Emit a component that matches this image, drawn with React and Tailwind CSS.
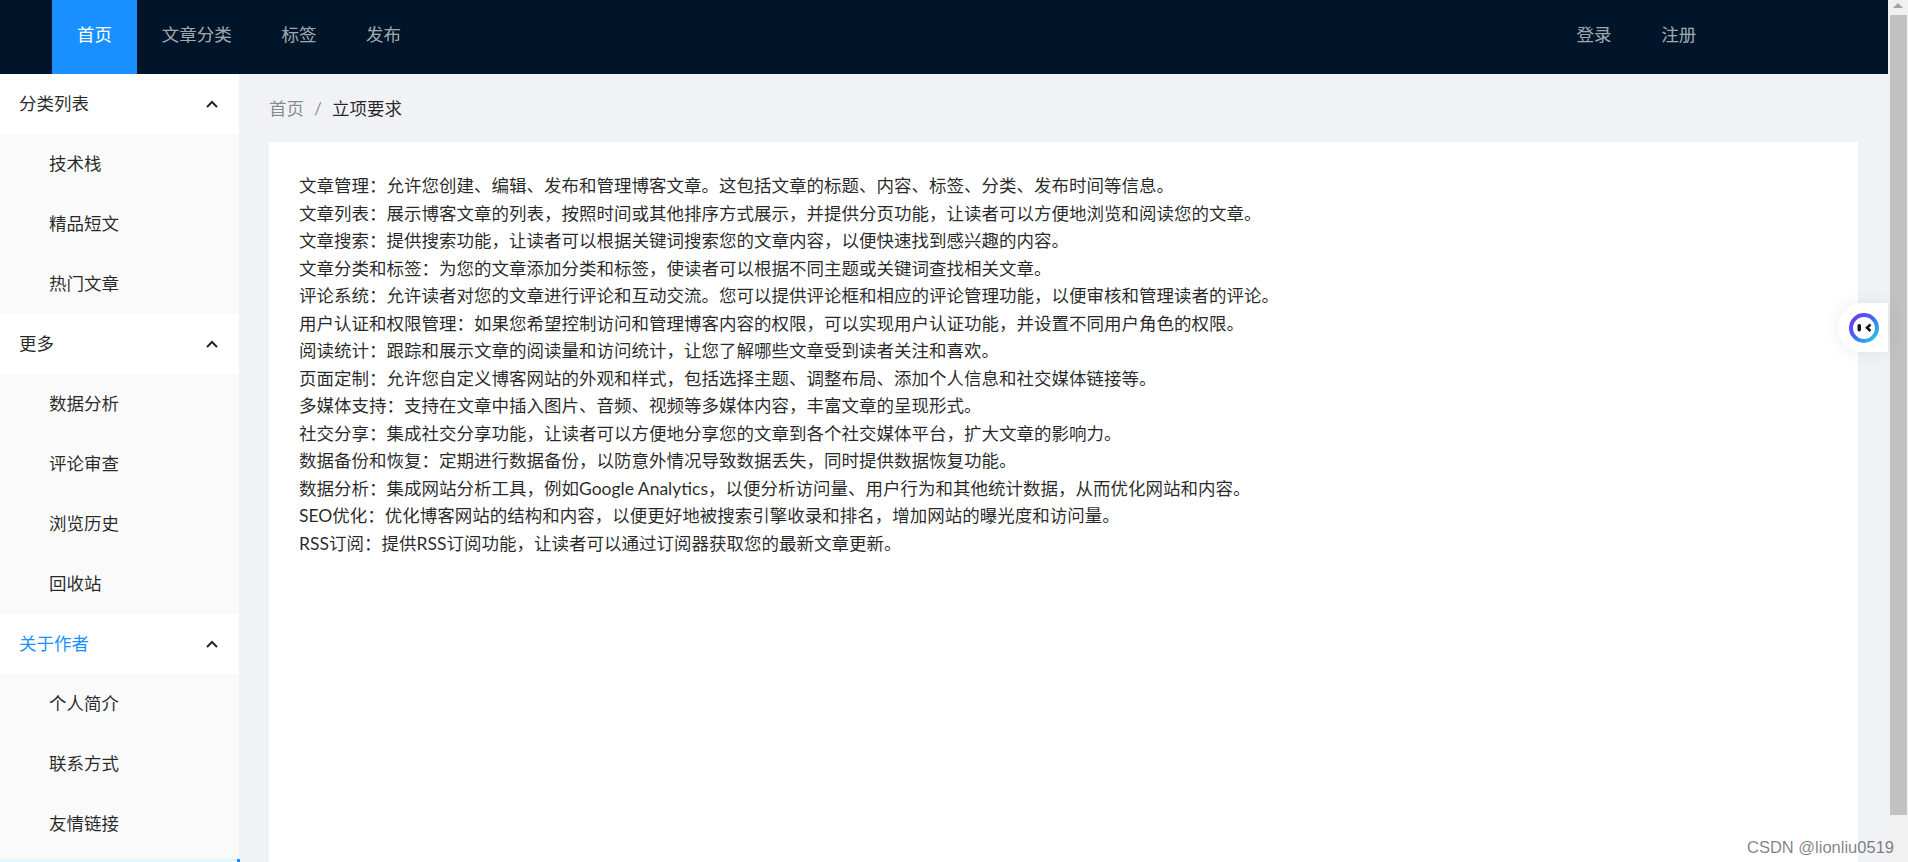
import React from 'react';

const navLeft = ['文章分类', '标签', '发布'];
const navRight = ['登录', '注册'];

const menu = [
  { title: '分类列表', items: ['技术栈', '精品短文', '热门文章'] },
  { title: '更多', items: ['数据分析', '评论审查', '浏览历史', '回收站'] },
  { title: '关于作者', active: true, items: ['个人简介', '联系方式', '友情链接'] },
];

const lines = [
  '文章管理：允许您创建、编辑、发布和管理博客文章。这包括文章的标题、内容、标签、分类、发布时间等信息。',
  '文章列表：展示博客文章的列表，按照时间或其他排序方式展示，并提供分页功能，让读者可以方便地浏览和阅读您的文章。',
  '文章搜索：提供搜索功能，让读者可以根据关键词搜索您的文章内容，以便快速找到感兴趣的内容。',
  '文章分类和标签：为您的文章添加分类和标签，使读者可以根据不同主题或关键词查找相关文章。',
  '评论系统：允许读者对您的文章进行评论和互动交流。您可以提供评论框和相应的评论管理功能，以便审核和管理读者的评论。',
  '用户认证和权限管理：如果您希望控制访问和管理博客内容的权限，可以实现用户认证功能，并设置不同用户角色的权限。',
  '阅读统计：跟踪和展示文章的阅读量和访问统计，让您了解哪些文章受到读者关注和喜欢。',
  '页面定制：允许您自定义博客网站的外观和样式，包括选择主题、调整布局、添加个人信息和社交媒体链接等。',
  '多媒体支持：支持在文章中插入图片、音频、视频等多媒体内容，丰富文章的呈现形式。',
  '社交分享：集成社交分享功能，让读者可以方便地分享您的文章到各个社交媒体平台，扩大文章的影响力。',
  '数据备份和恢复：定期进行数据备份，以防意外情况导致数据丢失，同时提供数据恢复功能。',
  '数据分析：集成网站分析工具，例如Google Analytics，以便分析访问量、用户行为和其他统计数据，从而优化网站和内容。',
  'SEO优化：优化博客网站的结构和内容，以便更好地被搜索引擎收录和排名，增加网站的曝光度和访问量。',
  'RSS订阅：提供RSS订阅功能，让读者可以通过订阅器获取您的最新文章更新。',
];

const Chevron = () => (
  <svg width="12" height="8" viewBox="0 0 12 8" fill="none" stroke="#262626" strokeWidth="2">
    <path d="M1 7 L6 2 L11 7" />
  </svg>
);

// little round assistant logo on the right edge
const Widget = () => (
  <div className="absolute left-[1838px] top-[303px] flex h-[49px] w-[50px] items-center rounded-l-full bg-white pl-[11px] shadow-[0_0_16px_rgba(60,60,120,0.1)]">
    <svg width="30" height="30" viewBox="0 0 30 30" fill="none">
      <defs>
        <linearGradient id="ring" x1="0" y1="0" x2="1" y2="1">
          <stop offset="0" stopColor="#7a2ff0" />
          <stop offset="0.5" stopColor="#3a6cf5" />
          <stop offset="1" stopColor="#27d3e6" />
        </linearGradient>
      </defs>
      <circle cx="15" cy="15" r="13" stroke="url(#ring)" strokeWidth="4" />
      <rect x="8.5" y="11" width="3.5" height="7.5" rx="1.7" fill="#14141e" />
      <path d="M21.5 11.5 L18 14.8 L21.5 18" stroke="#14141e" strokeWidth="2.6" />
    </svg>
  </div>
);

const Scrollbar = () => (
  <div className="flex w-5 shrink-0 flex-col bg-[#f1f1f1]">
    <div className="flex h-[15px] items-start justify-center pt-[3px]">
      <svg width="10" height="5" viewBox="0 0 10 5">
        <path d="M5 0 L10 5 L0 5 Z" fill="#a3a3a3" />
      </svg>
    </div>
    <div className="ml-0.5 h-[800px] w-[17px] bg-[#c1c1c1]" />
  </div>
);

export default function App() {
  return (
    <div className="relative flex h-[862px] overflow-hidden bg-white font-['Lato','Noto_Sans_CJK_SC',sans-serif] text-[17.5px] text-[#000000d9]">
      <div className="flex min-w-0 flex-1 flex-col">
        <header className="flex h-[74px] shrink-0 items-center justify-between bg-[#001529] pl-[52px] pr-[167px] text-[#ffffffa6]">
          <nav className="flex h-full">
            <a className="flex w-[85px] items-center justify-center bg-[#1890ff] pb-[3px] text-white">首页</a>
            {navLeft.map((n) => (
              <a key={n} className="flex items-center px-[24.8px] pb-[3px]">{n}</a>
            ))}
          </nav>
          <nav className="flex h-full">
            {navRight.map((n) => (
              <a key={n} className="flex items-center px-[24.8px] pb-[3px]">{n}</a>
            ))}
          </nav>
        </header>

        <div className="flex min-h-0 flex-1">
          <aside className="relative z-10 w-[239px] shrink-0 bg-white">
            {menu.map((group) => (
              <div key={group.title}>
                <div className="flex h-[60px] items-center justify-between pl-[19px] pr-[21px]">
                  <span className={group.active ? 'text-[#1890ff]' : ''}>{group.title}</span>
                  <Chevron />
                </div>
                <div className={group.active ? 'bg-[#fafafa] pb-[5px]' : 'bg-[#fafafa]'}>
                  {group.items.map((item) => (
                    <div key={item} className="flex h-[60px] items-center pl-[49px]">{item}</div>
                  ))}
                </div>
              </div>
            ))}
            <div className="h-[60px] w-[240px] border-r-[3px] border-[#1890ff] bg-[#e6f7ff]" />
          </aside>

          <main className="flex min-w-0 flex-1 flex-col bg-[#f0f2f5] px-[30px]">
            <div className="flex h-[68px] shrink-0 items-center pt-0.5 text-[#00000073]">
              <span>首页</span>
              <span className="mx-[10px]">/</span>
              <span className="text-[#000000d9]">立项要求</span>
            </div>
            <div className="flex-1 bg-white px-[30px] pt-[30px] leading-[27.5px]">
              {lines.map((l) => (
                <p key={l}>{l}</p>
              ))}
            </div>
          </main>
        </div>
      </div>

      <Scrollbar />
      <Widget />
      <span className="absolute left-[1747px] top-[837px] font-['Liberation_Sans',sans-serif] text-[16.5px] leading-[20px] text-[#00000080]">
        CSDN @lionliu0519
      </span>
    </div>
  );
}
